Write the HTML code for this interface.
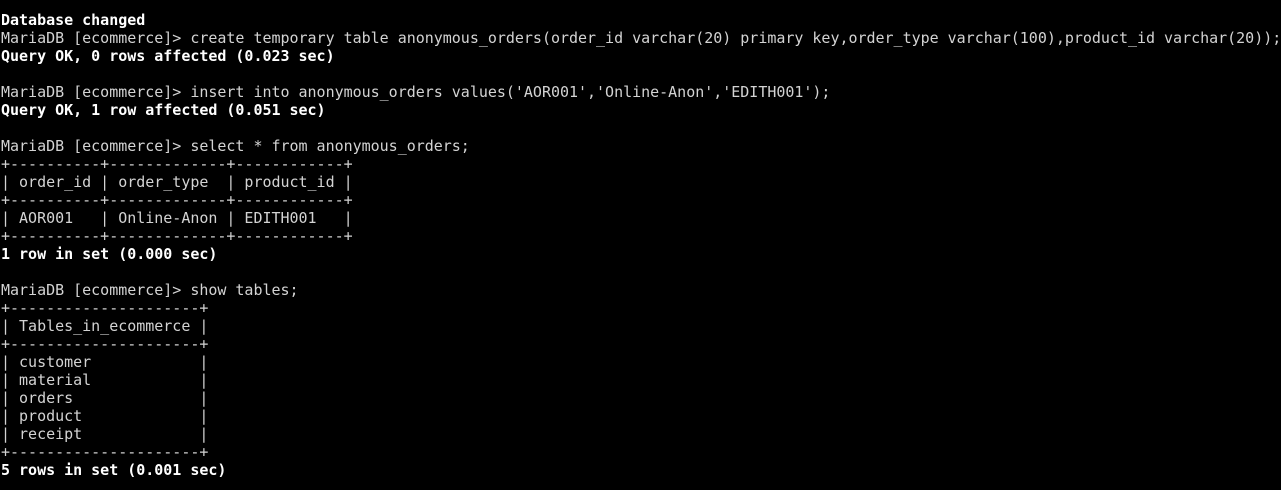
<!DOCTYPE html>
<html><head><meta charset="utf-8"><style>
html,body{margin:0;padding:0;background:#000;width:1281px;height:490px;overflow:hidden}
pre{margin:0;position:absolute;left:1px;top:11px;font-family:"DejaVu Sans Mono","Liberation Mono",monospace;font-size:15px;letter-spacing:-0.015px;line-height:18px;color:#d3d3d3;white-space:pre}
b{color:#fff;font-weight:bold}
</style></head><body><pre><b>Database changed</b>
MariaDB [ecommerce]&gt; create temporary table anonymous_orders(order_id varchar(20) primary key,order_type varchar(100),product_id varchar(20));
<b>Query OK, 0 rows affected (0.023 sec)</b>

MariaDB [ecommerce]&gt; insert into anonymous_orders values('AOR001','Online-Anon','EDITH001');
<b>Query OK, 1 row affected (0.051 sec)</b>

MariaDB [ecommerce]&gt; select * from anonymous_orders;
+----------+-------------+------------+
| order_id | order_type  | product_id |
+----------+-------------+------------+
| AOR001   | Online-Anon | EDITH001   |
+----------+-------------+------------+
<b>1 row in set (0.000 sec)</b>

MariaDB [ecommerce]&gt; show tables;
+---------------------+
| Tables_in_ecommerce |
+---------------------+
| customer            |
| material            |
| orders              |
| product             |
| receipt             |
+---------------------+
<b>5 rows in set (0.001 sec)</b>
</pre></body></html>
